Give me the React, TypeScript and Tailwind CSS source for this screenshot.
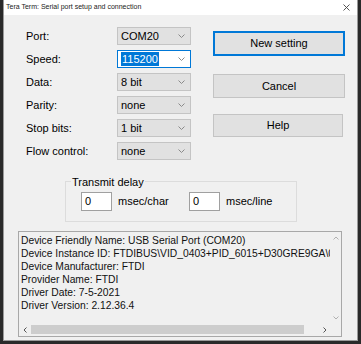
import React from 'react'

const font = { fontFamily: '"Liberation Sans", Arial, sans-serif' }

const Chevron = () => (
    <svg width="7" height="4" viewBox="0 0 7 4" className="shrink-0">
        <path d="M0.5 0.5 L3.5 3.5 L6.5 0.5" fill="none" stroke="#8a8a8a" strokeWidth="1" />
    </svg>
)

const Combo = ({ value, active }: { value: string; active?: boolean }) => (
    <div
        className={`w-[74px] h-[18px] flex items-center justify-between pl-[3px] pr-[5px] border ${
            active ? 'bg-white border-[#0078d7]' : 'bg-[#e1e1e1] border-[#c4c4c4]'
        }`}
    >
        {active ? (
            <span className="bg-[#0078d7] text-white px-[1px] leading-[14px]">{value}</span>
        ) : (
            <span className="leading-[14px]">{value}</span>
        )}
        <Chevron />
    </div>
)

const rows = [
    { label: 'Port:', value: 'COM20' },
    { label: 'Speed:', value: '115200', active: true },
    { label: 'Data:', value: '8 bit' },
    { label: 'Parity:', value: 'none' },
    { label: 'Stop bits:', value: '1 bit' },
    { label: 'Flow control:', value: 'none' },
]

const info = [
    'Device Friendly Name: USB Serial Port (COM20)',
    'Device Instance ID: FTDIBUS\\VID_0403+PID_6015+D30GRE9GA\\0',
    'Device Manufacturer: FTDI',
    'Provider Name: FTDI',
    'Driver Date: 7-5-2021',
    'Driver Version: 2.12.36.4',
]

export default function App() {
    return (
        <div className="w-[361px] h-[344px] bg-[#2a2a2a] pl-[3px] overflow-hidden text-[11px] text-black" style={font}>
            <div className="w-[355px] h-[341px] bg-[#f0f0f0] border-l border-r border-b border-[#9a9a9a] flex flex-col">
                {/* title bar */}
                <div className="h-[15px] bg-white flex items-center justify-between pl-[2px] pr-[7px] shrink-0">
                    <span className="text-[7px] text-[#222]">Tera Term: Serial port setup and connection</span>
                    <svg width="7" height="7" viewBox="0 0 7 7">
                        <path d="M0.5 0.5 L6.5 6.5 M6.5 0.5 L0.5 6.5" stroke="#444" strokeWidth="0.9" />
                    </svg>
                </div>

                <div className="flex pt-[12px] pl-[22px]">
                    <div className="flex flex-col gap-[5px]">
                        {rows.map((r) => (
                            <div key={r.label} className="flex items-center h-[18px]">
                                <span className="w-[91px]">{r.label}</span>
                                <Combo value={r.value} active={r.active} />
                            </div>
                        ))}
                    </div>

                    <div className="flex flex-col ml-[22px] pt-[4px]">
                        <button className="w-[132px] h-[25px] bg-[#e1e1e1] border-2 border-[#0078d7] flex items-center justify-center">
                            New setting
                        </button>
                        <button className="mt-[18px] w-[132px] h-[24px] bg-[#e1e1e1] border border-[#c4c4c4] flex items-center justify-center">
                            Cancel
                        </button>
                        <button className="mt-[16px] w-[130px] h-[23px] bg-[#e1e1e1] border border-[#c4c4c4] flex items-center justify-center">
                            Help
                        </button>
                    </div>
                </div>

                {/* transmit delay */}
                <div className="relative ml-[61px] mt-[21px] w-[232px] h-[41px] border border-[#dcdcdc]">
                    <span className="absolute -top-[8px] left-[5px] bg-[#f0f0f0] px-[1px]">Transmit delay</span>
                    <div className="flex items-center pt-[10px] pl-[15px]">
                        <div className="w-[31px] h-[19px] bg-white border border-[#a0a0a0] pl-[3px] leading-[17px]">0</div>
                        <span className="ml-[6px] w-[71px]">msec/char</span>
                        <div className="w-[31px] h-[19px] bg-white border border-[#a0a0a0] pl-[3px] leading-[17px]">0</div>
                        <span className="ml-[6px]">msec/line</span>
                    </div>
                </div>

                {/* device info */}
                <div className="ml-[14px] mt-[9px] w-[324px] h-[106px] bg-[#f0f0f0] border border-[#a8a8a8] flex flex-col">
                    <div className="flex flex-1 min-h-0">
                        <div className="flex-1 overflow-hidden pl-[2px] pt-[2px] text-[10.3px] leading-[13px] whitespace-nowrap text-[#111]">
                            {info.map((l) => (
                                <div key={l}>{l}</div>
                            ))}
                        </div>
                        <div className="w-[11px] flex flex-col items-center justify-between py-[4px]">
                            <svg width="6" height="4" viewBox="0 0 6 4">
                                <path d="M0.5 3.5 L3 1 L5.5 3.5" fill="none" stroke="#b0b0b0" />
                            </svg>
                            <svg width="6" height="4" viewBox="0 0 6 4">
                                <path d="M0.5 0.5 L3 3 L5.5 0.5" fill="none" stroke="#b0b0b0" />
                            </svg>
                        </div>
                    </div>
                    <div className="h-[11px] flex items-center pl-[4px] pr-[14px] mb-[1px]">
                        <svg width="4" height="6" viewBox="0 0 4 6">
                            <path d="M3.5 0.5 L1 3 L3.5 5.5" fill="none" stroke="#555" />
                        </svg>
                        <div className="ml-[4px] w-[273px] h-[9px] bg-[#cdcdcd]" />
                        <svg width="4" height="6" viewBox="0 0 4 6" className="ml-auto">
                            <path d="M0.5 0.5 L3 3 L0.5 5.5" fill="none" stroke="#555" />
                        </svg>
                    </div>
                </div>
            </div>
        </div>
    )
}
